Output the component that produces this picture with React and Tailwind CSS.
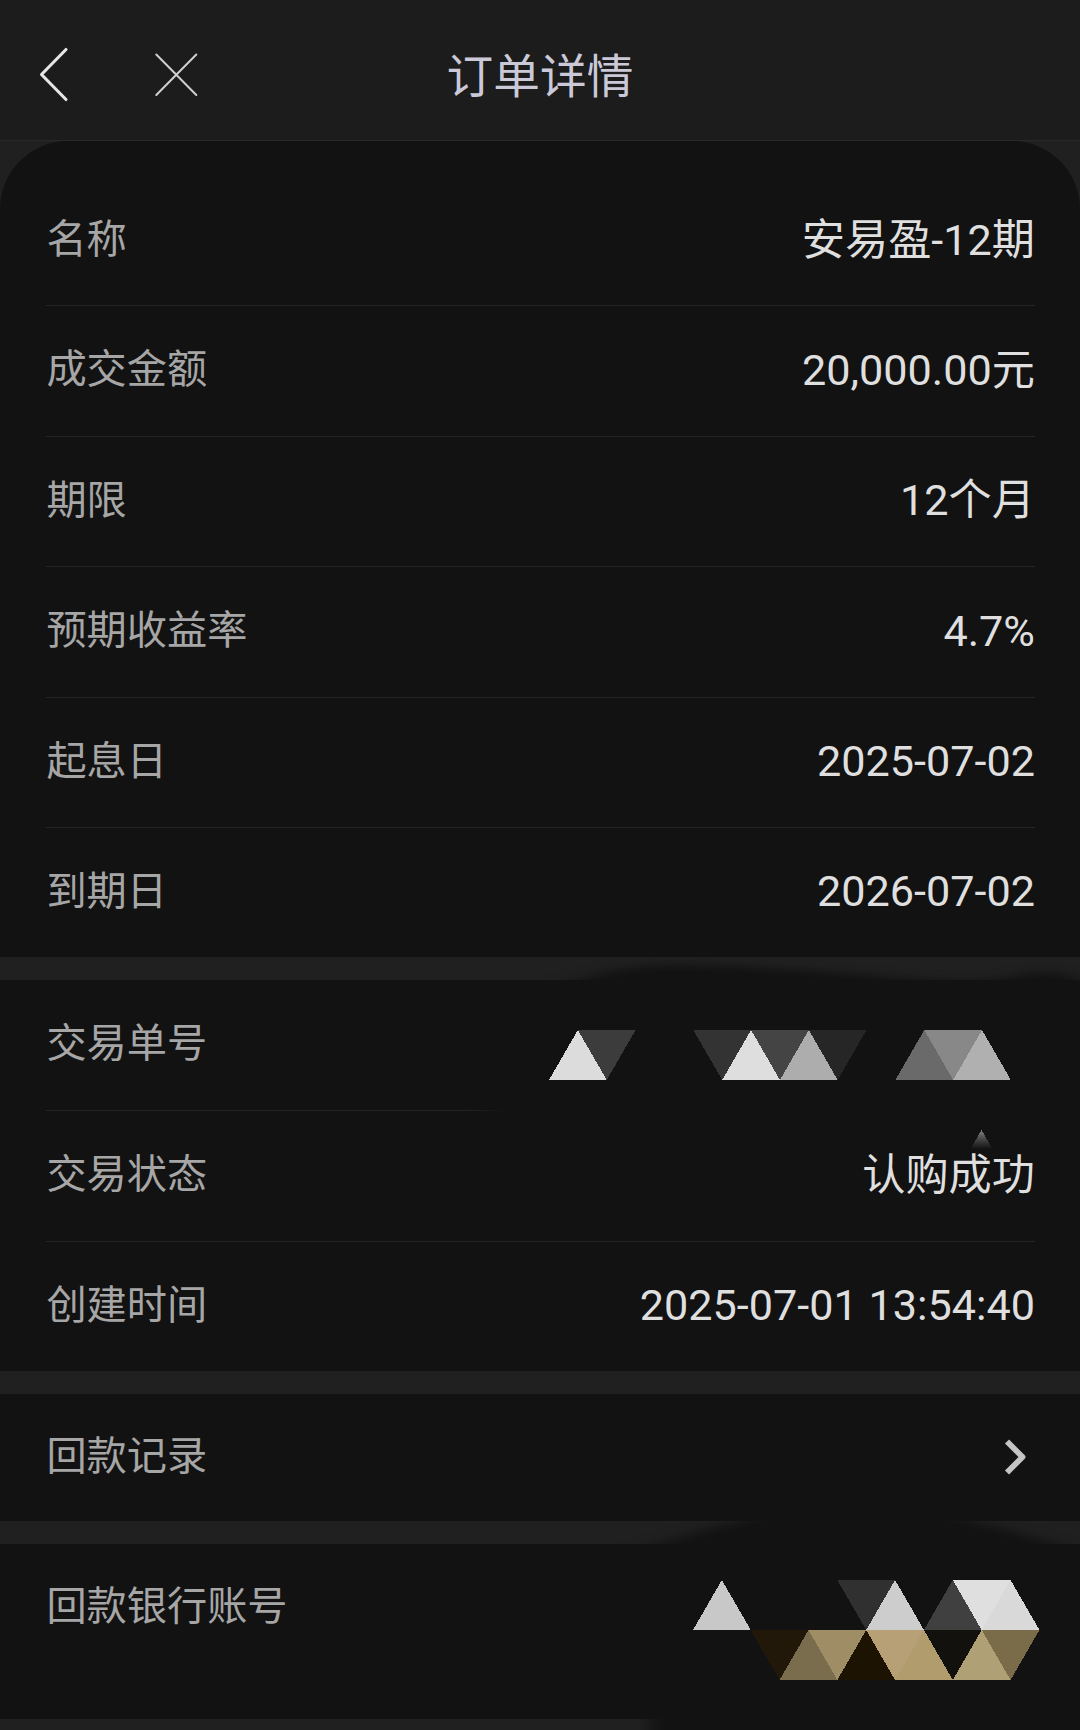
import React from 'react';

// half of a mosaic cell's base, cells are equilateral and 50px high
const HALF = 28.8675;

const productRows = [
  { label: '名称', value: '安易盈-12期' },
  { label: '成交金额', value: '20,000.00元' },
  { label: '期限', value: '12个月' },
  { label: '预期收益率', value: '4.7%' },
  { label: '起息日', value: '2025-07-02' },
  { label: '到期日', value: '2026-07-02' },
];

// [column, row, direction, colour]
const orderCells = [
  [0, 0, 'up', '#dcdcdc'],
  [1, 0, 'down', '#3c3c3c'],
  [5, 0, 'down', '#333333'],
  [6, 0, 'up', '#dedede'],
  [7, 0, 'down', '#444444'],
  [8, 0, 'up', '#adadad'],
  [9, 0, 'down', '#262626'],
  [12, 0, 'up', '#6a6a6a'],
  [13, 0, 'down', '#888888'],
  [14, 0, 'up', '#b0b0b0'],
];

const accountCells = [
  [0, 0, 'up', '#c8c8c8'],
  [5, 0, 'down', '#303030'],
  [6, 0, 'up', '#cdcdcd'],
  [8, 0, 'up', '#404040'],
  [9, 0, 'down', '#dfdfdf'],
  [10, 0, 'up', '#d9d9d9'],
  [2, 1, 'down', '#221809'],
  [3, 1, 'up', '#7a6d4e'],
  [4, 1, 'down', '#9e8d65'],
  [5, 1, 'up', '#1c1302'],
  [6, 1, 'down', '#b7a076'],
  [7, 1, 'up', '#b19c6d'],
  [8, 1, 'down', '#12110e'],
  [9, 1, 'up', '#b0a076'],
  [10, 1, 'down', '#7a6c48'],
];

const Mosaic = ({ cells, className }) => (
  <svg className={className} shapeRendering="crispEdges">
    {cells.map(([col, row, dir, color]) => {
      const x = col * HALF;
      const top = row * 50;
      const flat = dir === 'up' ? top + 50 : top;
      const tip = dir === 'up' ? top : top + 50;
      return (
        <polygon
          key={`${col}-${row}`}
          points={`${x},${flat} ${x + HALF * 2},${flat} ${x + HALF},${tip}`}
          fill={color}
        />
      );
    })}
  </svg>
);

// dark brush stroke that runs over the gap above a section
const Smudge = ({ id, blur, d }) => (
  <div className="absolute -top-[23px] left-0 h-[23px] w-full overflow-hidden">
    <svg className="h-[23px] w-[1080px]">
      <defs>
        <filter id={id} x="-20%" y="-80%" width="140%" height="260%" colorInterpolationFilters="sRGB">
          <feGaussianBlur stdDeviation={blur} />
        </filter>
      </defs>
      <path d={d} fill="#121212" filter={`url(#${id})`} />
    </svg>
  </div>
);

const Row = ({ label, value, children, className = 'h-[130.4px] border-b border-[#252525]' }) => (
  <div className={`ml-[46px] mr-[45px] flex items-center justify-between ${className}`}>
    <span className="relative left-[0.4px] top-[-0.5px] text-[40.2px] leading-none text-[#a6a6a6]">{label}</span>
    {value && <span className="relative top-[-0.5px] text-[43.2px] leading-none text-[#dfdfdf]">{value}</span>}
    {children}
  </div>
);

const App = () => {
  return (
    <div className="w-[1080px] h-[1730px] overflow-hidden bg-[#202020] font-['Roboto','Noto_Sans_CJK_SC',sans-serif]">
      <header className="flex h-[141px] items-center border-b border-[#282828] bg-[#1c1c1c]">
        <div className="flex w-[360px] items-center">
          <svg className="ml-[36px] mt-[8px] h-[60px] w-[36px]" viewBox="36 44 36 60" fill="none" stroke="#e6e6e6" strokeWidth="3.1" strokeLinecap="round" strokeLinejoin="round">
            <path d="M66 49.5 L41.5 74.5 L66 99.5" />
          </svg>
          <svg className="ml-[78px] mt-[10px] h-[50px] w-[50px]" viewBox="150 50 50 50" fill="none" stroke="#cfcfcf" strokeWidth="2" strokeLinecap="round">
            <path d="M156.3 54.5 L196.3 95 M196.3 54.5 L156.3 95" />
          </svg>
        </div>
        <h1 className="mt-[15px] w-[360px] text-center text-[46.7px] leading-none text-[#cbc9d8]">订单详情</h1>
      </header>

      <section className="h-[816px] rounded-t-[68px] bg-[#121212] pt-[35px]">
        {productRows.map((row, i) => (
          <Row
            key={row.label}
            label={row.label}
            value={row.value}
            className={i === productRows.length - 1 ? 'h-[129px]' : undefined}
          />
        ))}
      </section>

      <section className="relative mt-[23px] h-[391px] bg-[#121212]">
        <Smudge
          id="smudge-order"
          blur="14 4"
          d="M545 34 C585 22 615 9 665 8 C740 8 820 14 880 19 C930 24 980 26 1004 22 C1030 13 1055 13 1075 20 L1100 45 L545 45 Z"
        />
        <Row label="交易单号" className="h-[130px]">
          <Mosaic cells={orderCells} className="mr-[24.6px] mt-[20px] h-[50px] w-[461.9px]" />
        </Row>
        <div className="ml-[46px] h-px w-[460px] bg-linear-to-r from-[#252525] from-90% to-[#121212]" />
        <Row label="交易状态" value="认购成功" className="h-[131px] border-b border-[#252525]" />
        <svg className="absolute left-[966px] top-[150px] h-[19px] w-[32px]" shapeRendering="crispEdges">
          <defs>
            <linearGradient id="fade" x1="0" y1="0" x2="0" y2="1">
              <stop offset="0" stopColor="#858585" />
              <stop offset="0.5" stopColor="#444444" />
              <stop offset="1" stopColor="#121212" />
            </linearGradient>
          </defs>
          <polygon points="15.5,0 26.5,19 4.5,19" fill="url(#fade)" />
        </svg>
        <Row label="创建时间" value="2025-07-01 13:54:40" className="h-[129px]" />
      </section>

      <section className="mt-[23px] h-[127px] bg-[#121212]">
        <Row label="回款记录" className="h-[127px]">
          <svg className="mb-[2px] mr-[5px] h-[44px] w-[30px]" viewBox="1000 1435 30 44" fill="none" stroke="#c4c4c4" strokeWidth="5.8" strokeLinejoin="round">
            <path d="M1007 1441.5 L1022.5 1457 L1007 1472.5" />
          </svg>
        </Row>
      </section>

      <section className="relative mt-[23px] h-[175px] bg-[#121212]">
        <Smudge
          id="smudge-account"
          blur="13 4"
          d="M630 34 C670 18 725 2 785 -10 L930 -10 C980 2 1030 14 1075 30 L1075 50 L630 50 Z"
        />
        <div className="flex justify-between">
          <Row label="回款银行账号" className="h-[127px]" />
          <Mosaic cells={accountCells} className="mr-[40.8px] mt-[36px] h-[100px] w-[346.4px]" />
        </div>
      </section>

      <div className="h-[11px] bg-linear-to-r from-[#202020] from-[59%] to-[#121212] to-[61.5%]" />
    </div>
  );
};

export default App;
